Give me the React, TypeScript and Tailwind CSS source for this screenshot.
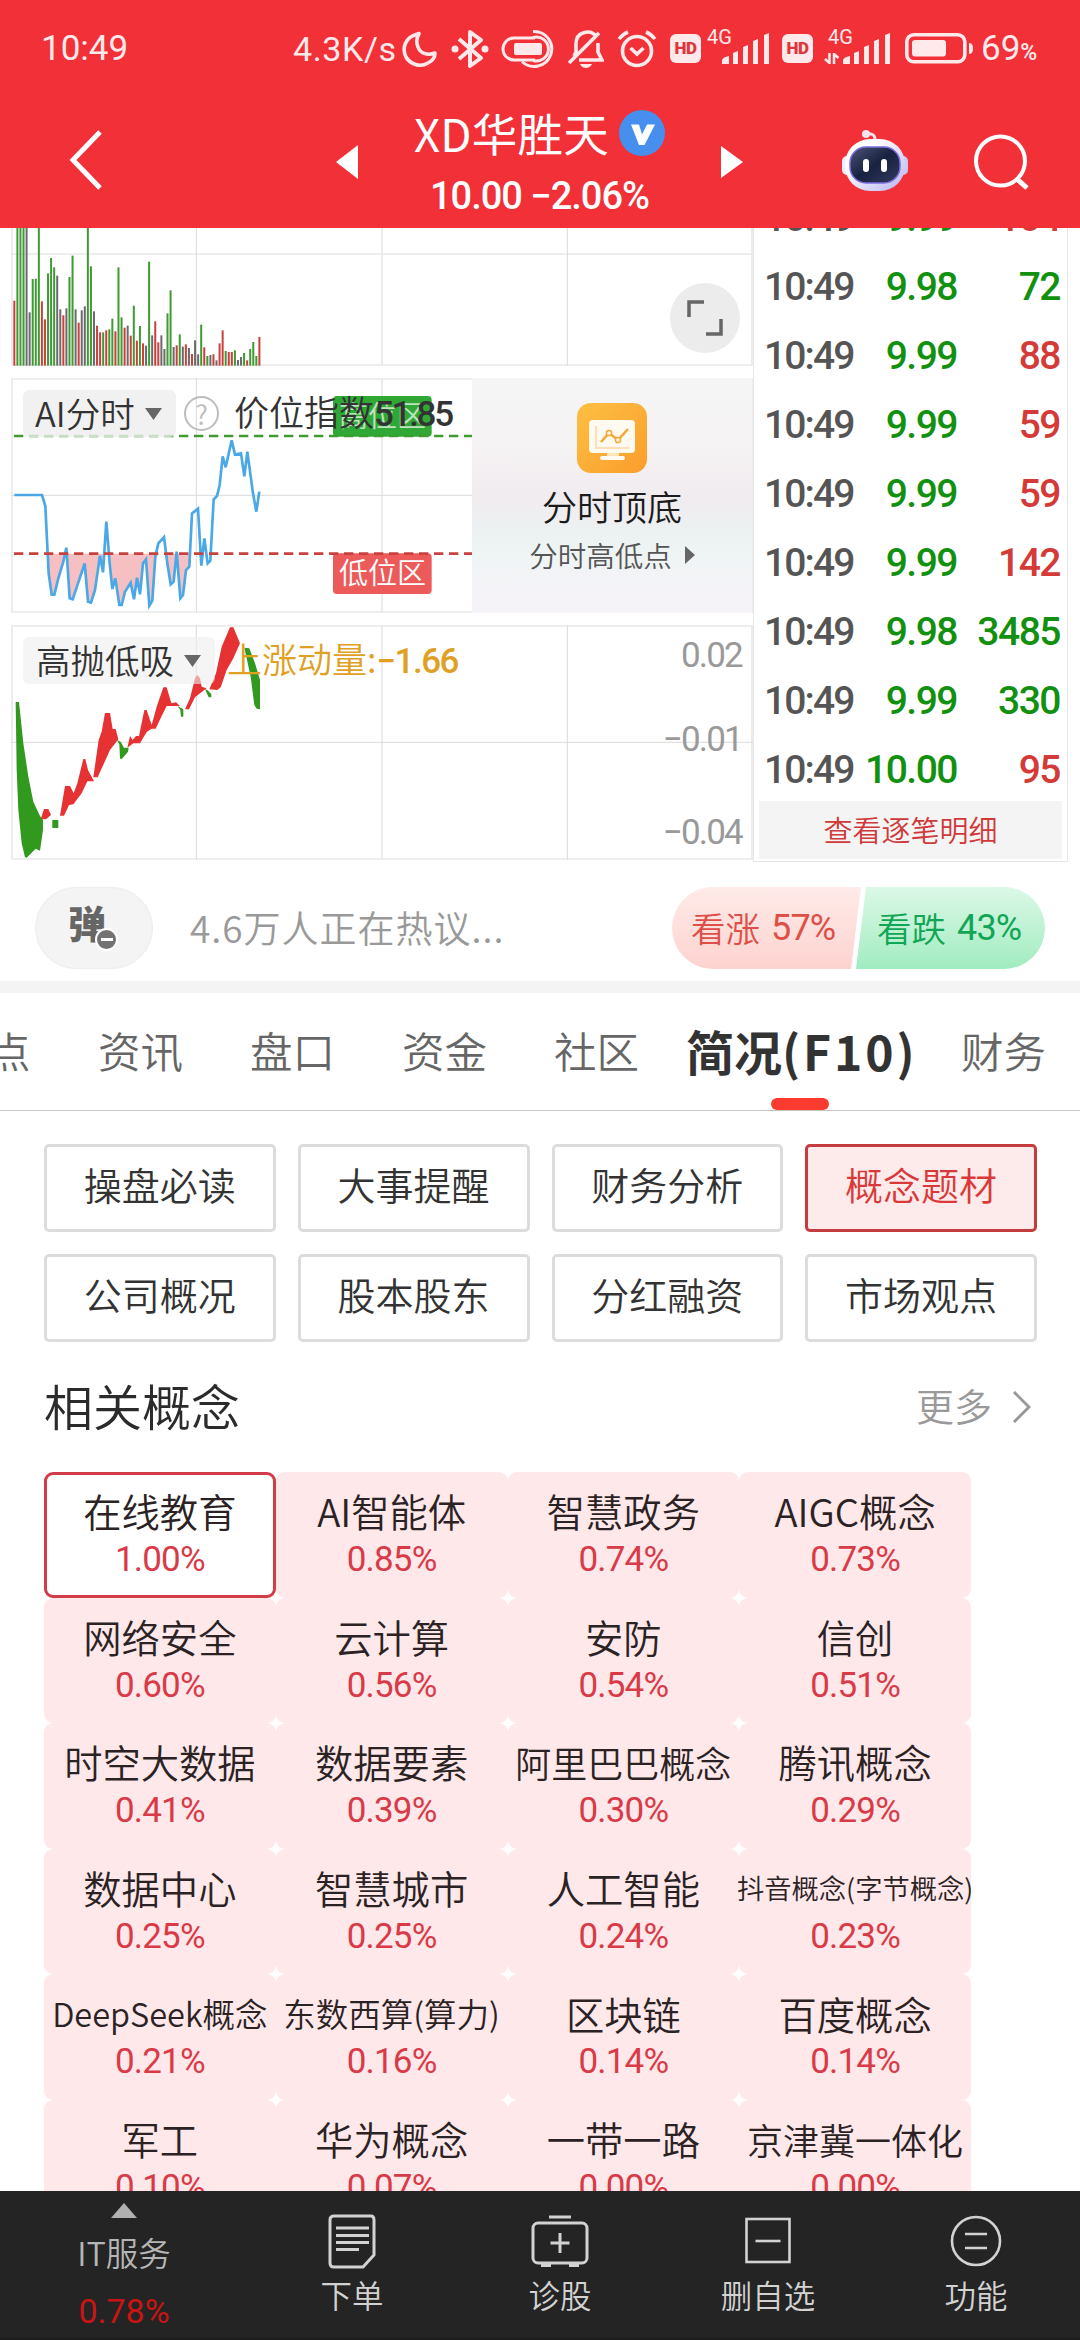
import React from 'react';

type Tone = 'r' | 'g' | 'k';

interface Tick {
    time: string;
    price: string;
    volume: string;
    up: boolean;
}

interface Concept {
    name: string;
    change: string;
    size?: string;
}

const TONES: Record<Tone, string> = { r: '#c9403c', g: '#3f9a34', k: '#6b6b6b' };

// tone + top edge of each minute bar, on a 3x grid
const VOLUME =
    'r242 g0 g0 g0 k0 k277 g177 g176 g0 r244 r298 g160 g114 g142 k167 k268 r286 k265 g171 g107 k268 r308 k271 k259 g0 g139 k274 r317 r337 g337 r331 g328 g296 r334 g142 g292 r323 k317 r347 g257 r362 g318 r370 k377 g125 k346 r304 r367 k346 k387 g280 g211 k381 r376 g343 k380 r373 k384 r402 k361 k403 g314 r382 g408 k405 r403 k421 r370 r331 g393 r396 r396 g391 k420 k411 g399 r421 g387 g366 g408 r351'.split(' ');

const INDEX_LINE =
    '43,825 126,825 136,858 146,1060 155,1124 163,1124 175,1075 190,1025 199,983 209,1135 218,1138 254,1030 264,1145 273,1148 285,1110 300,1007 309,1057 319,905 329,1030 337,1107 346,1075 358,1155 365,1155 375,1115 392,1088 402,1138 411,1073 420,1123 429,1030 438,1018 448,1157 457,1142 466,1010 475,970 492,951 502,1030 512,1093 521,1085 530,995 541,1135 549,1125 558,1050 568,1040 576,880 594,866 604,1037 613,955 623,1030 631,1022 641,838 651,828 659,795 668,709 677,742 695,661 705,704 723,700 733,769 742,695 759,820 769,875 778,815';

const RED_AREAS = [
    '122,628 132,597 145,597 153,615 138,628',
    '180,617 195,528 210,528 221,550 232,520 250,447 256,447 264,480 282,514 262,514 245,550 220,583 207,585 192,617',
    '280,502 296,390 305,365 315,309 330,309 338,357 347,357 355,388 330,420 293,502',
    '382,413 390,378 398,390 408,378 417,378 433,300 440,300 455,345 470,290 490,232 500,232 514,280 528,277 540,288 500,288 485,318 467,356 455,356 440,366 420,400 400,400',
    '555,298 570,265 585,205 592,195 600,205 605,230 620,235 600,250 585,262 567,298',
    '628,238 648,190 665,110 690,52 700,52 720,100 700,145 680,180 662,232 652,240',
];

const GREEN_AREAS = [
    '47,276 57,276 70,400 85,500 100,575 120,618 129,630 129,660 120,722 107,716 80,743 75,742 65,700 55,600 50,480',
    '157,630 175,630 175,654 157,654',
    '350,390 362,395 372,413 386,413 384,425 366,446 360,446 358,402',
    '533,288 550,298 550,320 543,320 541,300',
    '615,238 622,240 634,252 634,262 626,262',
    '733,113 748,115 765,160 780,210 780,298 770,296 763,285 752,200',
];

const ticks: Tick[] = [
    { time: '10:49', price: '9.99', volume: '104', up: true },
    { time: '10:49', price: '9.98', volume: '72', up: false },
    { time: '10:49', price: '9.99', volume: '88', up: true },
    { time: '10:49', price: '9.99', volume: '59', up: true },
    { time: '10:49', price: '9.99', volume: '59', up: true },
    { time: '10:49', price: '9.99', volume: '142', up: true },
    { time: '10:49', price: '9.98', volume: '3485', up: false },
    { time: '10:49', price: '9.99', volume: '330', up: false },
    { time: '10:49', price: '10.00', volume: '95', up: true },
];

const sections = ['操盘必读', '大事提醒', '财务分析', '概念题材', '公司概况', '股本股东', '分红融资', '市场观点'];

const concepts: Concept[] = [
    { name: '在线教育', change: '1.00%' },
    { name: 'AI智能体', change: '0.85%' },
    { name: '智慧政务', change: '0.74%' },
    { name: 'AIGC概念', change: '0.73%' },
    { name: '网络安全', change: '0.60%' },
    { name: '云计算', change: '0.56%' },
    { name: '安防', change: '0.54%' },
    { name: '信创', change: '0.51%' },
    { name: '时空大数据', change: '0.41%' },
    { name: '数据要素', change: '0.39%' },
    { name: '阿里巴巴概念', change: '0.30%', size: 'text-[36px]' },
    { name: '腾讯概念', change: '0.29%' },
    { name: '数据中心', change: '0.25%' },
    { name: '智慧城市', change: '0.25%' },
    { name: '人工智能', change: '0.24%' },
    { name: '抖音概念(字节概念)', change: '0.23%', size: 'text-[27.300px]' },
    { name: 'DeepSeek概念', change: '0.21%', size: 'text-[32.500px]' },
    { name: '东数西算(算力)', change: '0.16%', size: 'text-[32.500px]' },
    { name: '区块链', change: '0.14%' },
    { name: '百度概念', change: '0.14%' },
    { name: '军工', change: '0.10%' },
    { name: '华为概念', change: '0.07%' },
    { name: '一带一路', change: '0.00%' },
    { name: '京津冀一体化', change: '0.00%', size: 'text-[36px]' },
];

const Signal: React.FC = () => (
    <svg width="48" height="31" viewBox="0 0 48 31" fill="#ffe9ea">
        <path d="M0 31v-4q1-3 7-4v8z" />
        <path d="M11 20l5-2v13h-5z" />
        <path d="M21 14l5-2v19h-5z" />
        <path d="M31 8l5-2v25h-5z" />
        <path d="M42 2l5-2v31h-5z" />
    </svg>
);

const HdBadge: React.FC = () => (
    <span className="flex h-[29px] w-[31px] items-center justify-center rounded-[6px] bg-[#ffe9ea] font-['Roboto'] text-[17px] font-black tracking-[-0.5px] text-[#e0353c]">
        HD
    </span>
);

const StatusBar: React.FC = () => (
    <div className="flex h-[97px] items-center pl-[41px] font-['Roboto'] text-[35px] font-normal text-[#ffe9ea]">
        <span className="w-[252px] leading-none">10:49</span>
        <span className="w-[109px] text-[34px] leading-none tracking-[0.6px]">4.3K/s</span>
        <svg width="36" height="38" viewBox="0 0 36 38" fill="none" stroke="#ffe9ea" strokeWidth="3.6" strokeLinejoin="round">
            <path d="M17 3.500C2 7 0 19 4 27c4 7 14 11 22 6 4-2 7-6 7-10-8 3-15 0-17-6-2-5-1-10 1-13.500z" />
        </svg>
        <svg className="ml-[13px]" width="38" height="40" viewBox="0 0 38 40" fill="none" stroke="#ffe9ea" strokeWidth="4">
            <path d="M8 10l22 19-11 8V3l11 8L8 30" strokeLinejoin="round" />
            <circle cx="4" cy="20" r="3.500" fill="#ffe9ea" stroke="none" />
            <circle cx="34" cy="20" r="3.500" fill="#ffe9ea" stroke="none" />
        </svg>
        <svg className="ml-[12px]" width="54" height="40" viewBox="0 0 54 40" fill="none" stroke="#ffe9ea" strokeWidth="3">
            <path d="M34 9H13a11 11 0 0 0 0 22h21" />
            <rect x="13" y="14" width="28" height="12" rx="2" fill="#ffe9ea" stroke="none" />
            <path d="M32 8.500a12 12 0 1 1 0 23M32 2.500a17.500 17.500 0 1 1-11 30" />
        </svg>
        <svg className="ml-[13px]" width="36" height="40" viewBox="0 0 36 40" fill="none" stroke="#ffe9ea" strokeWidth="3.600">
            <path d="M31 4L1 34M27 6C22 1 8 2 8 15v8l-2 4M30 14v9l4 8H11" />
            <path d="M12 35h12q-2 4-6 4t-6-4z" fill="#ffe9ea" stroke="none" />
        </svg>
        <svg className="ml-[13px]" width="40" height="40" viewBox="0 0 40 40" fill="none" stroke="#ffe9ea" strokeWidth="3.600">
            <circle cx="20" cy="22" r="14.500" />
            <path d="M13.500 19l6.500 6 6.500-6M2 10q4-5 9-7M38 10q-4-5-9-7" />
        </svg>
        <span className="ml-[13px]"><HdBadge /></span>
        <span className="relative ml-[21px]">
            <Signal />
            <span className="absolute -left-[15px] -top-[6px] text-[20px] leading-none">4G</span>
        </span>
        <span className="ml-[12px]"><HdBadge /></span>
        <span className="relative ml-[30px]">
            <Signal />
            <span className="absolute -left-[15px] -top-[6px] text-[20px] leading-none">4G</span>
            <svg className="absolute -left-[19px] top-[20px]" width="16" height="11" viewBox="0 0 16 11" stroke="#ffe9ea" strokeWidth="2.500" fill="none">
                <path d="M5.500 0v10L1 6M10 11V1l4.500 4" />
            </svg>
        </span>
        <svg className="ml-[14px]" width="68" height="31" viewBox="0 0 68 31">
            <rect x="1.800" y="1.800" width="58" height="27" rx="7" fill="none" stroke="#ffe9ea" strokeWidth="3.600" />
            <rect x="7" y="7" width="34" height="16.500" rx="3" fill="#ffe9ea" />
            <path d="M64 10q4 0 4 5.500T64 21z" fill="#ffe9ea" />
        </svg>
        <span className="ml-[8px] leading-none">69<span className="text-[23px] font-medium">%</span></span>
    </div>
);

const Robot: React.FC = () => (
    <svg width="66" height="64" viewBox="0 0 66 64">
        <defs>
            <linearGradient id="shell" x1="0" y1="0" x2="1" y2="1">
                <stop offset="0.300" stopColor="#fdfcff" />
                <stop offset="1" stopColor="#b9b4ee" />
            </linearGradient>
            <linearGradient id="visor" x1="0" y1="0" x2="1" y2="1">
                <stop offset="0" stopColor="#4a5578" />
                <stop offset="0.500" stopColor="#18213f" />
                <stop offset="1" stopColor="#343c60" />
            </linearGradient>
        </defs>
        <path d="M24 5q10-2 9 8" fill="none" stroke="#f5e1ee" strokeWidth="3" />
        <circle cx="24" cy="5" r="4" fill="#f8e4ee" />
        <rect x="0" y="27" width="10" height="19" rx="5" fill="#efecff" />
        <rect x="56" y="27" width="10" height="19" rx="5" fill="#cbc9f6" />
        <rect x="3" y="10" width="60" height="52" rx="25" fill="url(#shell)" />
        <rect x="8" y="18" width="50" height="36" rx="16" fill="url(#visor)" stroke="#7a6ee0" strokeWidth="1.500" />
        <rect x="21" y="30" width="6" height="13" rx="3" fill="#fff" />
        <rect x="39" y="30" width="6" height="13" rx="3" fill="#fff" />
    </svg>
);

const TitleBar: React.FC = () => (
    <div className="flex h-[131px] items-start pl-[68px] text-white">
        <svg className="mt-[33px]" width="36" height="60" viewBox="0 0 36 60" fill="none" stroke="#fff" strokeWidth="5">
            <path d="M32 2L5 30l27 28" />
        </svg>
        <svg className="ml-[232px] mt-[48px]" width="22" height="34" viewBox="0 0 22 34" fill="#fff">
            <path d="M22 0v34L0 17z" />
        </svg>
        <div className="flex w-[363px] flex-col items-center">
            <div className="mt-[4px] flex items-center">
                <span className="-mt-[1px] text-[45.500px] font-normal leading-[64px] tracking-[0.200px]">XD华胜天</span>
                <svg className="ml-[10px]" width="46" height="46" viewBox="0 0 46 46">
                    <circle cx="23" cy="23" r="23" fill="#468fee" />
                    <path d="M12 14.500h8l3 10 5-10h8L25.500 35H20z" fill="#fff" />
                </svg>
            </div>
            <div className="mt-[10px] font-['Roboto'] text-[38px] font-medium leading-[44px] tracking-[-1px]">10.00 −2.06%</div>
        </div>
        <svg className="mt-[49px]" width="22" height="32" viewBox="0 0 22 32" fill="#fff">
            <path d="M0 0v32l22-16z" />
        </svg>
        <div className="ml-[99px] mt-[32px]"><Robot /></div>
        <svg className="ml-[65px] mt-[36px]" width="58" height="58" viewBox="0 0 58 58" fill="none" stroke="#fff" strokeWidth="4">
            <circle cx="27.500" cy="28" r="24.500" />
            <path d="M43 45l11 10" strokeWidth="5" />
        </svg>
    </div>
);

const VolumeChart: React.FC = () => (
    <div className="relative h-[150px]">
        <svg className="block" width="753" height="150" viewBox="0 24 2259 450">
            <g fill="none" stroke="#e9e9e9" strokeWidth="5">
                <path d="M36 0V436M1146 0V436M34 102H2259M34 435H2259M2256 0V436" />
                <path d="M589 0V436M1702 0V436" stroke="#dadada" strokeWidth="3" />
            </g>
            {VOLUME.map((bar, i) => {
                const top = Number(bar.slice(1));
                return <rect key={i} x={40 + i * 9.19} y={top} width="6" height={437 - top} fill={TONES[bar[0] as Tone]} />;
            })}
        </svg>
        <div className="absolute left-[670px] top-[55px] flex size-[70px] items-center justify-center rounded-full bg-[#ececec]">
            <svg width="36" height="36" viewBox="0 0 36 36" fill="none" stroke="#666" strokeWidth="3.500">
                <path d="M2 17V2h15M34 19v15H19" />
            </svg>
        </div>
    </div>
);

const Caret: React.FC = () => (
    <svg width="17" height="12" viewBox="0 0 17 12" fill="#666">
        <path d="M0 0h17L8.500 12z" />
    </svg>
);

const IndexChart: React.FC = () => (
    <div className="relative h-[247px]">
        <svg className="block" width="753" height="247" viewBox="0 474 2259 741">
            <defs>
                <clipPath id="lowZone">
                    <rect x="130" y="1001" width="442" height="180" />
                </clipPath>
            </defs>
            <g fill="none" stroke="#e9e9e9" strokeWidth="5">
                <path d="M36 476V1178M1146 476V1178M34 477H2259M34 1176H2259M2256 476V1178" />
                <path d="M589 476V1178M34 826H1416" stroke="#dadada" strokeWidth="3" />
            </g>
            <polygon points={`${INDEX_LINE} 778,700 43,700`} fill="#f6bfc1" clipPath="url(#lowZone)" />
            <rect x="999" y="528" width="296" height="122" rx="12" fill="#2fa835" />
            <rect x="999" y="1000" width="296" height="122" rx="12" fill="#ec5a5a" />
            <path d="M42 648H1416" stroke="#3f9a2f" strokeWidth="8" strokeDasharray="28 17" />
            <polyline points={INDEX_LINE} fill="none" stroke="#4aa8e6" strokeWidth="8" />
            <path d="M42 1001H1416" stroke="#c8413f" strokeWidth="8" strokeDasharray="28 17" />
        </svg>
        <span className="absolute left-[339px] top-[15px] text-[29px] leading-[42px] text-white/70">高位区</span>
        <span className="absolute left-[339px] top-[172px] text-[29px] leading-[42px] text-white">低位区</span>
        <div className="absolute left-[23px] top-[12px] flex h-[47px] items-center">
            <div className="flex h-full w-[153px] items-center justify-between rounded-[6px] bg-[#eeeeee]/80 pl-[12px] pr-[14px] text-[34.500px] leading-none text-[#333]">
                <span className="-mt-[3px]">AI分时</span>
                <Caret />
            </div>
            <span className="ml-[8px] flex size-[35px] items-center justify-center rounded-full border-[2.5px] border-[#bdbdbd] text-[27px] leading-none text-[#bdbdbd]">?</span>
            <span className="-mt-[3px] ml-[15px] text-[35px] leading-none text-[#333]">价位指数<span className="font-['Roboto'] font-medium tracking-[-2.300px]">51.85</span></span>
        </div>
        <div className="absolute left-[472px] top-0 flex h-[235px] w-[280px] flex-col items-center bg-[linear-gradient(180deg,#f6f6f6_0%,#f5f2f4_30%,#f1ecef_50%,#ecf1f2_66%,#eff4f5_76%,#f5f3f7_92%)]">
            <svg className="mt-[25px] shrink-0" width="70" height="70" viewBox="0 0 70 70">
                <defs>
                    <linearGradient id="promo" x1="0" y1="0" x2="1" y2="1">
                        <stop offset="0" stopColor="#fcc043" />
                        <stop offset="1" stopColor="#fb9d2c" />
                    </linearGradient>
                </defs>
                <rect width="70" height="70" rx="14" fill="url(#promo)" />
                <path d="M30 49h12v6H30z" fill="#ffe6b8" />
                <rect x="12" y="17" width="46" height="33" rx="4" fill="#fffaf0" />
                <rect x="23" y="53" width="25" height="4" rx="2" fill="#fffaf0" />
                <path d="M19 23v22h33" fill="none" stroke="#fde0b8" strokeWidth="2" />
                <path d="M24 39l8-9 9 7 10-11" fill="none" stroke="#f5a835" strokeWidth="2.500" />
                <circle cx="32" cy="30" r="2.600" fill="#fffaf0" stroke="#f5a835" strokeWidth="1.500" />
                <circle cx="41" cy="37" r="2.600" fill="#fffaf0" stroke="#f5a835" strokeWidth="1.500" />
            </svg>
            <div className="mt-[11px] text-[35px] leading-[44px] text-[#1c1c1c]">分时顶底</div>
            <div className="mt-[7px] flex items-center text-[28.500px] leading-[40px] text-[#555]">
                分时高低点
                <svg className="ml-[13px]" width="10" height="18" viewBox="0 0 10 18" fill="#666">
                    <path d="M0 0l10 9-10 9z" />
                </svg>
            </div>
        </div>
    </div>
);

const MomentumChart: React.FC = () => (
    <div className="relative h-[237px]">
        <svg className="block" width="753" height="237" viewBox="0 45 2259 711">
            <g fill="none" stroke="#e9e9e9" strokeWidth="5">
                <path d="M36 46V749M1146 46V749M34 48H2259M34 747H2259M2256 46V749" />
                <path d="M589 46V749M1702 46V749M34 397H2259" stroke="#dadada" strokeWidth="3" />
            </g>
            {RED_AREAS.map((points) => <polygon key={points} points={points} fill="#e63232" />)}
            {GREEN_AREAS.map((points) => <polygon key={points} points={points} fill="#32991f" />)}
        </svg>
        <div className="absolute left-[23px] top-[12px] flex h-[47px] items-center">
            <div className="flex h-full w-[192px] items-center justify-between rounded-[6px] bg-[#eeeeee]/60 pl-[13px] pr-[14px] text-[34.500px] leading-none text-[#333]">
                <span className="-mt-[3px]">高抛低吸</span>
                <Caret />
            </div>
            <span className="-mt-[3px] ml-[12px] text-[35px] leading-none text-[#dfa023]">上涨动量:<span className="font-['Roboto'] font-medium tracking-[-1.500px]">−1.66</span></span>
        </div>
        <div className="absolute right-[11px] top-[9px] flex flex-col text-right font-['Roboto'] text-[35px] font-normal leading-[44px] tracking-[-1.800px] text-[#999]">
            <span>0.02</span>
            <span className="mt-[40px]">−0.01</span>
            <span className="mt-[49px]">−0.04</span>
        </div>
    </div>
);

const TickList: React.FC = () => (
    <div className="flex h-[634px] w-[315px] flex-col justify-end overflow-hidden border-x border-b border-[#e6e6e6] px-[5px] pb-[2px]">
        {ticks.map((tick, i) => (
            <div key={i} className="grid h-[69px] shrink-0 grid-cols-[92px_101px_1fr] items-center pl-[5px] pr-[2px] pt-[8px] font-['Roboto'] text-[39px] font-medium leading-none tracking-[-1.500px]">
                <span className="tracking-[-1.900px] text-[#555]">{tick.time}</span>
                <span className="text-right text-[#12900f]">{tick.price}</span>
                <span className={tick.up ? 'text-right text-[#d33a38]' : 'text-right text-[#12900f]'}>{tick.volume}</span>
            </div>
        ))}
        <div className="flex h-[58px] shrink-0 items-center justify-center bg-[#f4f4f4] text-[29px] text-[#d0393a]">查看逐笔明细</div>
    </div>
);

const Discussion: React.FC = () => (
    <div className="flex h-[119px] shrink-0 items-start pl-[35px] pt-[25px]">
        <div className="relative flex h-[82px] w-[118px] items-center justify-center rounded-full border border-[#ececec] bg-[#f4f4f4]">
            <span className="-ml-[14px] -mt-[12px] text-[38px] font-black leading-none text-[#666]">弹</span>
            <span className="absolute left-[59px] top-[40px] flex size-[23px] items-center justify-center rounded-full border-2 border-white bg-[#737373]">
                <span className="h-[3px] w-[12px] bg-white" />
            </span>
        </div>
        <span className="ml-[37px] w-[482px] text-[37px] leading-[80px] tracking-[1px] text-[#999]">4.6万人正在热议...</span>
        <div className="flex h-[82px] w-[373px] overflow-hidden rounded-full text-[34.500px]">
            <div className="flex w-[189px] items-center bg-gradient-to-b from-[#feebe9] to-[#fdd3cf] pl-[19px] text-[#dd4f47] [clip-path:polygon(0_0,100%_0,179px_100%,0_100%)]">看涨<span className="ml-[11px] font-['Roboto'] text-[36px] font-normal tracking-[-0.800px]">57%</span></div>
            <div className="-ml-[5px] flex w-[189px] items-center bg-gradient-to-b from-[#dcf8e7] to-[#a0ecc0] pl-[21px] text-[#12a556] [clip-path:polygon(10px_0,100%_0,100%_100%,0_100%)]">看跌<span className="ml-[11px] font-['Roboto'] text-[36px] font-normal tracking-[-0.800px]">43%</span></div>
        </div>
    </div>
);

const Tabs: React.FC = () => (
    <div className="relative flex h-[118px] shrink-0 items-center overflow-hidden border-b-[1.500px] border-[#c4c4c4] pb-[3px] text-[42.500px] text-[#666]">
        <span className="-ml-[12px] w-[110px] shrink-0">点</span>
        <span className="w-[152px] shrink-0">资讯</span>
        <span className="w-[152px] shrink-0">盘口</span>
        <span className="w-[152px] shrink-0">资金</span>
        <span className="w-[132px] shrink-0">社区</span>
        <span className="w-[275px] shrink-0 text-[48px] font-bold text-[#333]">简况<span className="tracking-[2.900px]">(F10)</span></span>
        <span className="shrink-0">财务</span>
        <span className="absolute bottom-0 left-[771px] h-[12px] w-[58px] rounded-full bg-[#fb3b30]" />
    </div>
);

const SectionGrid: React.FC = () => (
    <div className="grid grid-cols-4 gap-[22px] pl-[44px] pr-[43px] pt-[33px]">
        {sections.map((name) => (
            <div
                key={name}
                className={
                    name === '概念题材'
                        ? 'flex h-[88px] items-center justify-center rounded-[5px] border-[3px] border-[#c43c3e] bg-[#fdebeb] pb-[9px] text-[38px] text-[#d93a39]'
                        : 'flex h-[88px] items-center justify-center rounded-[5px] border-[3px] border-[#dcdcdc] pb-[9px] text-[38px] text-[#333]'
                }
            >
                {name}
            </div>
        ))}
    </div>
);

const ConceptGrid: React.FC = () => (
    <div className="min-h-0 flex-1 overflow-hidden pl-[44px]">
        <div className="grid w-[927px] grid-cols-4">
            {concepts.map((item, i) => (
                <div
                    key={item.name}
                    className={
                        i === 0
                            ? 'flex h-[125.600px] flex-col items-center rounded-[9px] border-[3px] border-[#d13c48] pt-[10px]'
                            : 'flex h-[125.600px] flex-col items-center rounded-[9px] bg-[#ffe8ea] pt-[13px]'
                    }
                >
                    <div className={`flex h-[52px] items-center whitespace-nowrap text-[#2b2224] ${item.size || 'text-[38.300px]'}`}>{item.name}</div>
                    <div className="mt-[1px] font-['Roboto'] text-[35px] font-normal leading-[44px] tracking-[-0.800px] text-[#d93a47]">{item.change}</div>
                </div>
            ))}
        </div>
    </div>
);

const BottomNav: React.FC = () => (
    <div className="flex h-[149px] shrink-0 border-b-2 border-[#1c1c1c] bg-[#242424] text-[31.500px] leading-[40px] text-[#d2d2d2]">
        <div className="flex w-[248px] flex-col items-center text-[#b5b5b5]">
            <svg className="mt-[12px]" width="26" height="15" viewBox="0 0 26 15" fill="#b0b0b0">
                <path d="M0 15L13 0l13 15z" />
            </svg>
            <span className="mt-[14px] text-[32.500px]">IT服务</span>
            <span className="mt-[19px] font-['Roboto'] text-[34px] font-normal text-[#c81414]">0.78%</span>
        </div>
        <div className="flex w-[208px] flex-col items-center">
            <svg className="mt-[22px]" width="50" height="56" viewBox="0 0 50 56" fill="none" stroke="#d2d2d2" strokeWidth="3">
                <path d="M6 3h38q3 0 3 4v35L36 54H7q-4 0-4-4V7q0-4 4-4z" />
                <path d="M9 15h33M9 22.500h33M9 29.500h33M9 36.500h23" />
            </svg>
            <span className="mt-[5px]">下单</span>
        </div>
        <div className="flex w-[208px] flex-col items-center">
            <svg className="mt-[22px]" width="58" height="56" viewBox="0 0 58 56" fill="none" stroke="#d2d2d2" strokeWidth="3">
                <rect x="2" y="10" width="54" height="40" rx="5" />
                <path d="M18 4h22M29 20v20M19.500 30h19M10 52.500h10M38 52.500h10" />
            </svg>
            <span className="mt-[5px]">诊股</span>
        </div>
        <div className="flex w-[208px] flex-col items-center">
            <svg className="mt-[22px]" width="50" height="56" viewBox="0 0 50 56" fill="none" stroke="#d2d2d2" strokeWidth="2.600">
                <rect x="3.500" y="6" width="43" height="43" />
                <path d="M12.500 28h25" />
            </svg>
            <span className="mt-[5px]">删自选</span>
        </div>
        <div className="flex w-[208px] flex-col items-center">
            <svg className="mt-[22px]" width="54" height="56" viewBox="0 0 54 56" fill="none" stroke="#d2d2d2" strokeWidth="2.600">
                <circle cx="27" cy="28" r="24" />
                <path d="M16 21h22M16 35h22" />
            </svg>
            <span className="mt-[5px]">功能</span>
        </div>
    </div>
);

const App: React.FC = () => {
    return (
        <div className="flex h-[2340px] w-[1080px] flex-col overflow-hidden bg-white font-['Noto_Sans_CJK_SC',sans-serif] font-[350]">
            <header className="h-[228px] shrink-0 bg-[#f13038]">
                <StatusBar />
                <TitleBar />
            </header>
            <div className="flex h-[634px] shrink-0">
                <div className="w-[753px] shrink-0">
                    <VolumeChart />
                    <IndexChart />
                    <MomentumChart />
                </div>
                <TickList />
            </div>
            <Discussion />
            <div className="h-[12px] shrink-0 bg-[#f4f4f4]" />
            <Tabs />
            <SectionGrid />
            <div className="flex h-[130px] shrink-0 items-center justify-between pl-[44px] pr-[49px]">
                <h2 className="-mt-[5px] text-[49px] leading-none text-[#2b2b2b]">相关概念</h2>
                <div className="flex items-center text-[38px] leading-none text-[#999]">
                    <span className="-mt-[4px]">更多</span>
                    <svg className="ml-[19px]" width="20" height="32" viewBox="0 0 20 32" fill="none" stroke="#999" strokeWidth="3">
                        <path d="M3 1l15 15L3 31" />
                    </svg>
                </div>
            </div>
            <ConceptGrid />
            <BottomNav />
        </div>
    );
};

export default App;
